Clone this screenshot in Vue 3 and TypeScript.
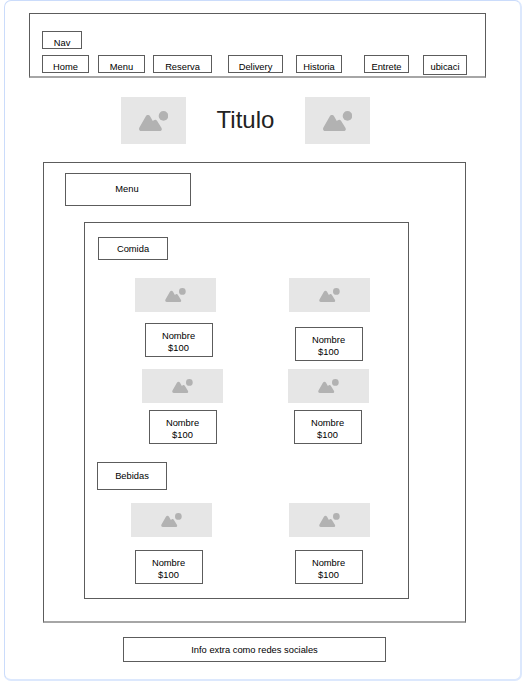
<script setup lang="ts">
import { h, type FunctionalComponent } from 'vue'

interface Dish {
  name: string
  price: string
}

interface Section {
  title: string
  key: string
  rows: Dish[][]
}

const links: string[] = ['Home', 'Menu', 'Reserva', 'Delivery', 'Historia', 'Entrete', 'ubicaci']

const dish = (): Dish => ({ name: 'Nombre', price: '$100' })

const sections: Section[] = [
  { title: 'Comida', key: 'food', rows: [[dish(), dish()], [dish(), dish()]] },
  { title: 'Bebidas', key: 'drinks', rows: [[dish(), dish()]] },
]

const PictureIcon: FunctionalComponent = () =>
  h('svg', { viewBox: '0 0 29.4 20', fill: '#b2b2b2', 'aria-hidden': 'true' }, [
    h('path', {
      d: 'M2.3 20C.3 20-.5 18.200.400 16.600L6.700 5.400C7.800 3.500 10.100 3.500 11.200 5.400L13.800 10L14.800 9.200C15.900 8.300 17.300 8.600 18 9.800L22.400 16.700C23.400 18.400 22.600 20 20.700 20Z',
    }),
    h('circle', { cx: 24.5, cy: 4.9, r: 4.8 }),
  ])
</script>

<template>
  <main class="frame">
    <header class="nav box">
      <div class="nav-title box">Nav</div>
      <nav class="links">
        <a v-for="link in links" :key="link" class="link box">{{ link }}</a>
      </nav>
    </header>

    <section class="hero">
      <div class="picture large"><PictureIcon /></div>
      <h1>Titulo</h1>
      <div class="picture large"><PictureIcon /></div>
    </section>

    <section class="menu box">
      <h2 class="menu-title box">Menu</h2>
      <div class="catalog box">
        <section v-for="section in sections" :key="section.key" :class="section.key">
          <h3 class="section-title box">{{ section.title }}</h3>
          <div v-for="(row, r) in section.rows" :key="r" class="row">
            <article v-for="(item, i) in row" :key="i" class="dish">
              <div class="picture"><PictureIcon /></div>
              <p class="label box">
                <span>{{ item.name }}</span>
                <span>{{ item.price }}</span>
              </p>
            </article>
          </div>
        </section>
      </div>
    </section>

    <footer class="extra box">Info extra como redes sociales</footer>
  </main>
</template>

<style>
body {
  background: #fff;
}
</style>

<style scoped>
.frame,
.frame * {
  box-sizing: border-box;
}

.frame {
  width: 518px;
  height: 681px;
  margin-left: 4px;
  padding: 12px 0 0 24px;
  display: flex;
  flex-direction: column;
  align-items: flex-start;
  border: 1px solid #cbdcfb;
  border-right: 2px solid #dce8fd;
  border-bottom: 2px solid #dce8fd;
  border-radius: 7px;
  background: #fff;
  color: #000;
  font-family: "Liberation Sans", Arial, sans-serif;
  font-size: 9.33px;
  line-height: 12px;
}

h1,
h2,
h3,
p {
  margin: 0;
  font-size: inherit;
  font-weight: 400;
}

.box {
  border: 1px solid #5c5c5c;
}

.nav {
  width: 457px;
  height: 65px;
  padding: 17px 0 0 12px;
  border-bottom: 2px solid #a6a6a6;
}

.nav-title {
  width: 40px;
  height: 18px;
  padding-top: 5px;
  text-align: center;
}

.links {
  display: flex;
  align-items: flex-start;
  margin-top: 6px;
}

.link {
  width: 47px;
  height: 18px;
  padding-top: 5px;
  text-align: center;
}

.link:nth-child(2) {
  margin-left: 9px;
}

.link:nth-child(3) {
  width: 59px;
  margin-left: 8px;
}

.link:nth-child(4) {
  width: 55px;
  margin-left: 16px;
}

.link:nth-child(5) {
  width: 46px;
  margin-left: 13px;
}

.link:nth-child(6) {
  width: 45px;
  margin-left: 22px;
}

.link:nth-child(7) {
  width: 44px;
  height: 20px;
  margin-left: 14px;
}

.picture {
  display: flex;
  align-items: center;
  justify-content: center;
  width: 81px;
  height: 34px;
  background: #e6e6e6;
}

.picture svg {
  display: block;
  width: 21px;
  height: 14px;
}

.picture.large {
  width: 65px;
  height: 47px;
}

.picture.large svg {
  width: 29.4px;
  height: 20px;
}

.hero {
  display: flex;
  align-items: center;
  margin: 19px 0 0 92px;
}

.hero h1 {
  width: 119px;
  height: 47px;
  color: #222;
  font-size: 24px;
  line-height: 45px;
  text-align: center;
}

.menu {
  width: 423px;
  height: 461px;
  margin: 18px 0 0 14px;
  padding: 10px 0 0 21px;
  border-bottom: 2px solid #a6a6a6;
}

.menu-title {
  width: 126px;
  height: 33px;
  padding: 9px 2px 0 0;
  text-align: center;
}

.catalog {
  width: 325px;
  height: 377px;
  margin: 16px 0 0 19px;
  padding: 14px 0 0 12px;
}

.section-title {
  width: 70px;
  height: 23px;
  margin-left: 1px;
  padding-top: 5px;
  text-align: center;
}

.drinks .section-title {
  height: 28px;
  margin: 18px 0 0;
  padding-top: 7px;
}

.row {
  display: flex;
  align-items: flex-start;
}

.label {
  display: flex;
  flex-direction: column;
  align-items: center;
  width: 68px;
  height: 34px;
  padding: 6px 1px 0 0;
}

.food .row:nth-of-type(1) {
  height: 91px;
  margin: 18px 0 0 38px;
}

.food .row:nth-of-type(1) .dish:first-child {
  width: 154px;
}

.food .row:nth-of-type(1) .label {
  margin: 11px 0 0 10px;
}

.food .row:nth-of-type(1) .dish:last-child .label {
  margin: 15px 0 0 6px;
}

.food .row:nth-of-type(2) {
  margin-left: 45px;
}

.food .row:nth-of-type(2) .dish:first-child {
  width: 146px;
}

.food .row:nth-of-type(2) .label {
  margin: 7px 0 0 7px;
}

.food .row:nth-of-type(2) .dish:last-child .label {
  margin-left: 6px;
}

.drinks .row {
  margin: 13px 0 0 34px;
}

.drinks .dish:first-child {
  width: 158px;
}

.drinks .label {
  margin: 13px 0 0 4px;
}

.drinks .dish:last-child .label {
  margin-left: 6px;
}

.extra {
  width: 263px;
  height: 25px;
  margin: 14px 0 0 94px;
  padding-top: 6px;
  text-align: center;
}
</style>
